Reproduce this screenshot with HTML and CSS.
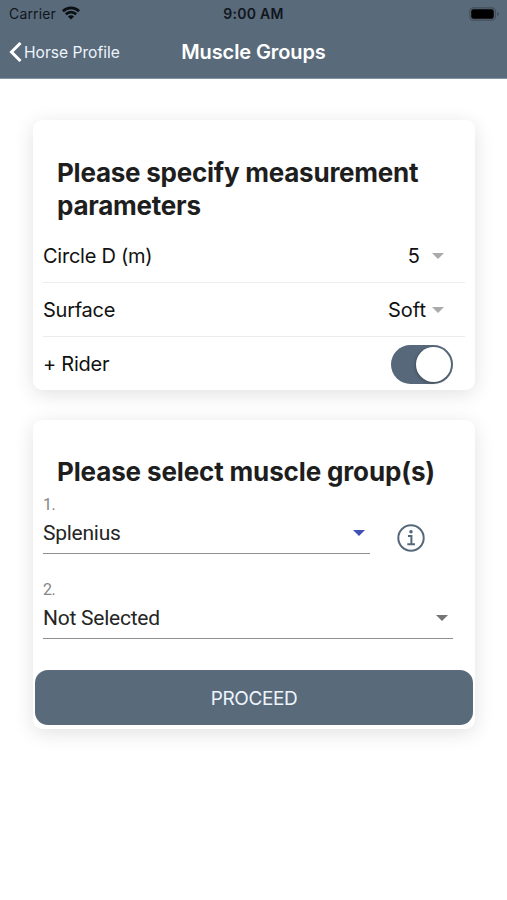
FILE: index.html
```html
<!DOCTYPE html>
<html lang="en">
<head>
<meta charset="utf-8">
<title>Muscle Groups</title>
<link rel="stylesheet" href="styles.css">
</head>
<body>
<header class="header">
  <div class="status">
    <div class="carrier"><span class="carrier-name">Carrier</span>
      <svg class="wifi" width="18" height="14" viewBox="0 0 18 14" fill="none" stroke="#0b1015" stroke-width="2.7"><path d="M.9 5.200a11.500 11.500 0 0 1 16.200 0M3.800 8.300a7.400 7.400 0 0 1 10.400 0"/><path d="M9 13.600 5.900 10.500a4.400 4.400 0 0 1 6.200 0Z" fill="#0b1015" stroke="none"/></svg>
    </div>
    <span class="clock">9:00 AM</span>
    <svg class="battery" width="31" height="14" viewBox="0 0 31 14"><rect x=".8" y=".8" width="25.6" height="12.4" rx="3.6" fill="none" stroke="#454f59" stroke-width="1.2"/><rect x="2.2" y="2.2" width="22.6" height="9.6" rx="2.2" fill="#000"/><path d="M28 5v4c1.500-.5 2-1.200 2-2s-.5-1.500-2-2Z" fill="#454f59"/></svg>
  </div>
  <nav class="nav">
    <a class="back"><svg width="14" height="20" viewBox="0 0 14 20" fill="none" stroke="#fff" stroke-width="3"><path d="M11.500 1 2.500 10l9 9"/></svg><span class="back-label">Horse Profile</span></a>
    <h1 class="title">Muscle Groups</h1>
    <span></span>
  </nav>
</header>
<main class="main">
  <section class="card params">
    <h2 class="heading">Please specify measurement parameters</h2>
    <div class="row"><span>Circle D (m)</span><span class="value">5<i class="arrow light far"></i></span></div>
    <div class="row"><span>Surface</span><span class="value">Soft<i class="arrow light"></i></span></div>
    <div class="row"><span>+ Rider</span><span class="toggle"><i class="knob"></i></span></div>
  </section>
  <section class="card muscles">
    <h2 class="heading select-heading">Please select muscle group(s)</h2>
    <div class="line">
      <div class="field narrow"><span class="label">1.</span><div class="select"><span>Splenius</span><i class="arrow blue"></i></div></div>
      <svg class="info" width="28" height="28" viewBox="0 0 28 28" fill="none" stroke="#56687a"><circle cx="14" cy="14" r="12.700" stroke-width="2"/><circle cx="14" cy="7.800" r="1.800" fill="#56687a" stroke="none"/><path d="M11 12h3.400v8M10.300 20.300h7.700" stroke-width="2"/></svg>
    </div>
    <div class="field second"><span class="label">2.</span><div class="select"><span>Not Selected</span><i class="arrow gray"></i></div></div>
    <button class="proceed">PROCEED</button>
  </section>
</main>
</body>
</html>
```
FILE: styles.css
```css
* { box-sizing: border-box; }
body { margin: 0; min-height: 100vh; background: #fff; color: #111; font-family: Inter, "Liberation Sans", sans-serif; }
.header { height: 79px; background: #596a7b; border-bottom: 1px solid #8294a5; }
.status { display: grid; grid-template-columns: 1fr auto 1fr; align-items: center; height: 27px; padding: 0 7px 0 9px; color: #10161c; font-size: 14px; }
.carrier { display: flex; align-items: center; gap: 6px; letter-spacing: .15px; }
.wifi { margin-top: -1px; }
.clock { margin-right: 2px; font-weight: 600; letter-spacing: .25px; }
.battery { justify-self: end; }
.nav { display: grid; grid-template-columns: 1fr auto 1fr; align-items: center; height: 50px; padding: 0 9px; color: #fff; }
.back { display: flex; align-items: center; gap: 1px; font-size: 15.6px; color: #edf4fc; }
.title { margin: 0; font-size: 20px; font-weight: 600; letter-spacing: -.1px; }
.main { display: flex; flex-direction: column; gap: 30px; min-height: calc(100vh - 79px); padding: 41px 32px 0 33px; }
.card { border-radius: 9px; background: #fff; box-shadow: 0 4px 20px rgba(0, 0, 0, .12); }
.params { height: 270px; padding: 36px 10px 0; }
.heading { margin: 0; padding-left: 14px; color: #1e1e1e; font-size: 26px; line-height: 33px; font-weight: 700; letter-spacing: -.24px; }
.row { display: flex; align-items: center; justify-content: space-between; height: 54px; padding-right: 12px; border-bottom: 1px solid #ececec; font-size: 20px; letter-spacing: -.25px; }
.params .heading { margin-bottom: 7px; }
.row:last-child { border: 0; }
.value { display: flex; align-items: center; gap: 6px; padding-right: 9px; letter-spacing: 0; }
.arrow { width: 0; height: 0; border: 6px solid transparent; border-top: 6px solid #aaa; border-bottom: 0; }
.far { margin-left: 6px; }
.blue { border-top-color: #3f51b5; }
.gray { border-top-color: #757575; }
.toggle { display: flex; justify-content: flex-end; align-items: center; width: 62px; height: 39px; padding: 2px; border-radius: 20px; background: #56687a; }
.knob { width: 35px; height: 35px; border-radius: 50%; background: #fff; box-shadow: -1px 1px 3px rgba(0, 0, 0, .25); }
.muscles { height: 309px; padding: 35px 2px 0; }
.select-heading { padding-left: 22px; letter-spacing: -.14px; }
.line { display: flex; align-items: flex-end; gap: 27px; height: 66px; padding-left: 8px; }
.field { font-family: Roboto, sans-serif; border-bottom: 1px solid #8f8f8f; }
.narrow { width: 327px; }
.label { display: block; height: 16px; color: #858585; font-size: 16px; line-height: 18px; letter-spacing: -.4px; }
.select { display: flex; align-items: center; justify-content: space-between; height: 41px; padding: 1px 5px 0 0; color: #252525; font-size: 21px; letter-spacing: -.25px; }
.info { margin-bottom: 2px; }
.second { width: 410px; margin: 27px 0 0 8px; }
.proceed { display: block; width: 438px; height: 55px; margin: 31px 0 0; padding-top: 2px; border: 0; border-radius: 13px; background: #596a7b; color: #edf4fc; font-family: inherit; font-size: 19px; letter-spacing: -.4px; }
```
